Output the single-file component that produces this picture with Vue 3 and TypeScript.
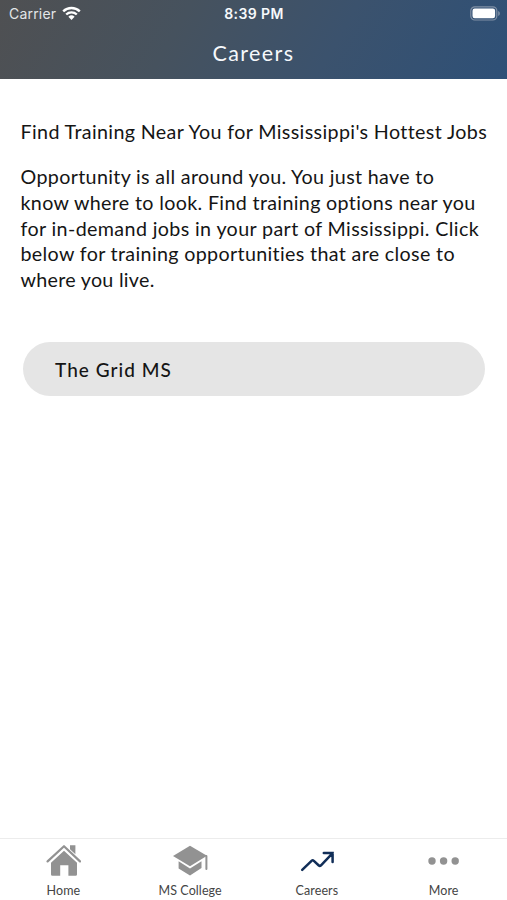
<script setup lang="ts">
interface TextLine {
  text: string
  spacing: number
}

interface Tab {
  id: string
  label: string
  active?: boolean
}

const heading: TextLine = { text: "Find Training Near You for Mississippi's Hottest Jobs", spacing: 0.36 }

const lines: TextLine[] = [
  { text: 'Opportunity is all around you. You just have to', spacing: 0.34 },
  { text: 'know where to look. Find training options near you', spacing: 0.34 },
  { text: 'for in-demand jobs in your part of Mississippi. Click', spacing: 0.37 },
  { text: 'below for training opportunities that are close to', spacing: 0.34 },
  { text: 'where you live.', spacing: 0.28 },
]

const tabs: Tab[] = [
  { id: 'home', label: 'Home' },
  { id: 'college', label: 'MS College' },
  { id: 'careers', label: 'Careers', active: true },
  { id: 'more', label: 'More' },
]
</script>

<template>
  <div class="screen">
    <header class="header">
      <div class="status">
        <div class="carrier">
          <span>Carrier</span>
          <svg class="wifi" viewBox="0 0 19 15" aria-hidden="true">
            <path d="M1.2 5.4a12 12 0 0 1 16.6 0" />
            <path d="M4.2 8.5a7.7 7.7 0 0 1 10.6 0" />
            <path class="dot" d="M6.4 10.8a4.5 4.5 0 0 1 6.2 0L9.5 14z" />
          </svg>
        </div>
        <span class="time">8:39 PM</span>
        <svg class="battery" viewBox="0 0 31 15" aria-hidden="true">
          <rect class="case" x="0.8" y="0.8" width="26" height="13.2" rx="4" />
          <rect class="charge" x="2.5" y="2.5" width="22.6" height="9.8" rx="2.2" />
          <path class="cap" d="M28.2 5v5c2.2-.8 2.2-4.2 0-5z" />
        </svg>
      </div>
      <h1 class="title">Careers</h1>
    </header>

    <main class="content">
      <h2 class="heading" :style="{ letterSpacing: heading.spacing + 'px' }">{{ heading.text }}</h2>
      <p class="copy">
        <span v-for="line in lines" :key="line.text" class="line" :style="{ letterSpacing: line.spacing + 'px' }">{{ line.text }}</span>
      </p>
      <button class="link" type="button">The Grid MS</button>
    </main>

    <nav class="tabs">
      <a v-for="tab in tabs" :key="tab.id" class="tab" :class="{ active: tab.active }">
        <svg v-if="tab.id === 'home'" class="icon" viewBox="-1 0 36 36" aria-hidden="true">
          <path class="fill" d="M18 7.8 31 19.8V31.4q0 1.4-1.4 1.4h-7.2V22.2h-8.2v10.6H6.4Q5 32.8 5 31.4V19.8z" />
          <path class="fill" d="M24 2.2h5.4v9L24 6.2z" />
          <path class="stroke roof" d="M1.6 18.4 18 3.2l16 15.2" />
        </svg>
        <svg v-else-if="tab.id === 'college'" class="icon" viewBox="0 0 36 36" aria-hidden="true">
          <path class="fill" d="M18 2.7 35 12.7 18 23.2 1 12.9z" />
          <path class="fill" d="M6.6 18.3 18 25.5l11.5-7.2v6.6L18 32.4 6.6 25.5z" />
          <path class="stroke tassel" d="M34.4 13v13" />
        </svg>
        <svg v-else-if="tab.id === 'careers'" class="icon" viewBox="0 0 36 36" aria-hidden="true">
          <path class="stroke trend" d="M3.2 26.9 12.8 17.6q.9-.8 1.8.1l5.2 4.8q1 .8 2 0L33.6 10.1M24.8 9.9h8.8v9.2" />
        </svg>
        <svg v-else class="icon" viewBox="0 0 36 36" aria-hidden="true">
          <circle class="fill" cx="6" cy="18" r="3.7" />
          <circle class="fill" cx="17.6" cy="18" r="3.7" />
          <circle class="fill" cx="29.2" cy="18" r="3.7" />
        </svg>
        <span>{{ tab.label }}</span>
      </a>
    </nav>
  </div>
</template>

<style>
body {
  margin: 0;
  background: #fff;
}
</style>

<style scoped>
.screen {
  display: flex;
  flex-direction: column;
  width: 507px;
  height: 900px;
  overflow: hidden;
  background: #fff;
  color: #151515;
  font-family: Lato, sans-serif;
}

.header {
  box-sizing: border-box;
  height: 79px;
  flex: none;
  background: linear-gradient(120deg, #4f5052 0%, #46525e 35%, #3b526d 65%, #2e5077 100%);
  color: #f6f9fc;
}

.status {
  display: grid;
  grid-template-columns: 1fr auto 1fr;
  align-items: center;
  height: 27px;
  padding: 0 6px 0 9px;
  font-family: Inter, sans-serif;
  font-size: 14px;
}

.carrier {
  display: flex;
  align-items: center;
  gap: 5.5px;
  color: #e3e6e8;
  letter-spacing: 0.2px;
}

.wifi {
  width: 19px;
  height: 15px;
  fill: none;
  stroke: #fff;
  stroke-width: 2.4;
}

.wifi .dot {
  fill: #fff;
  stroke: none;
}

.time {
  margin-right: 2px;
  font-weight: 600;
  letter-spacing: 0.4px;
}

.battery {
  justify-self: end;
  width: 31px;
  height: 15px;
}

.case {
  fill: none;
  stroke: #8090a5;
  stroke-width: 1.2;
}

.charge {
  fill: #fff;
}

.cap {
  fill: #8090a5;
}

.title {
  margin: 0;
  font-size: 21.5px;
  font-weight: 400;
  line-height: 52px;
  letter-spacing: 1.4px;
  text-align: center;
}

.content {
  flex: 1;
  display: flex;
  flex-direction: column;
  padding: 40px 22px 0 20.5px;
}

.heading,
.copy {
  margin: 0;
  font-size: 19.7px;
  font-weight: 400;
  line-height: 25.7px;
  white-space: nowrap;
}

.copy {
  margin-top: 19.6px;
}

.line {
  display: block;
}

.link {
  height: 54px;
  margin: 49.2px 0 0 2.5px;
  padding: 0 32px;
  border: 0;
  border-radius: 27px;
  background: #e5e5e5;
  color: #151515;
  font: 500 19px Lato, sans-serif;
  letter-spacing: 1.05px;
  text-align: left;
}

.tabs {
  box-sizing: border-box;
  display: grid;
  grid-template-columns: repeat(4, 1fr);
  height: 62px;
  flex: none;
  border-top: 1px solid #ececec;
}

.tab {
  display: flex;
  flex-direction: column;
  align-items: center;
  padding-top: 4px;
  color: #444;
  font-size: 12.5px;
  line-height: 24px;
  letter-spacing: 0.1px;
}

.icon {
  width: 36px;
  height: 36px;
  color: #929292;
}

.active .icon {
  color: #112e58;
}

.fill {
  fill: currentColor;
}

.stroke {
  fill: none;
  stroke: currentColor;
  stroke-linejoin: round;
  stroke-linecap: round;
}

.roof {
  stroke-width: 2.2;
}

.tassel {
  stroke-width: 2;
}

.trend {
  stroke-width: 2.5;
  stroke-linejoin: miter;
}
</style>
